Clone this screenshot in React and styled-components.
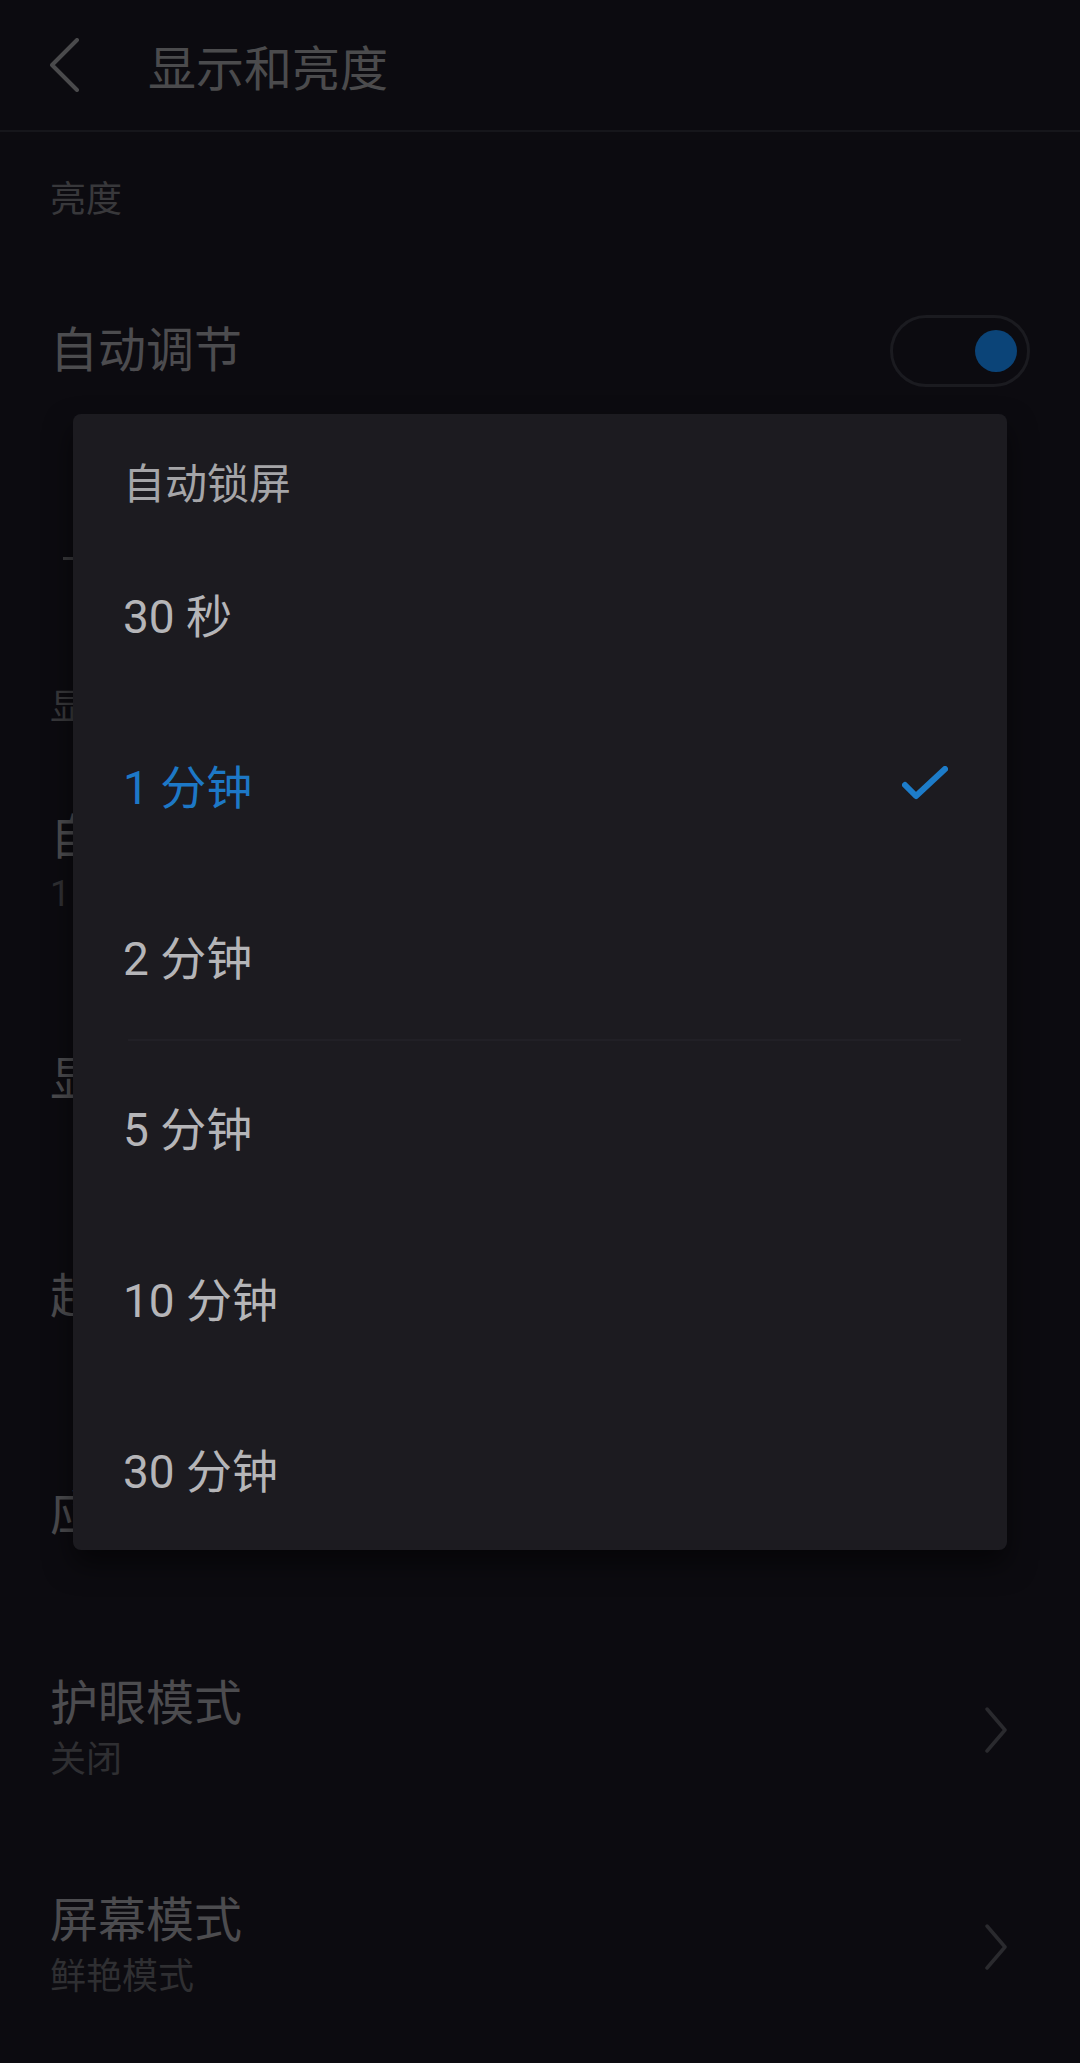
import React from 'react';
import styled, { createGlobalStyle } from 'styled-components';

const GlobalStyle = createGlobalStyle`
html, body {
    margin: 0;
    padding: 0;
    background: #0c0b10;
}
* {
    box-sizing: border-box;
}
`

const Screen = styled.div`
position: relative;
width: 1080px;
height: 2063px;
overflow: hidden;
background: #0c0b10;
font-family: Roboto, "Noto Sans CJK SC", sans-serif;
`
const Header = styled.header`
display: flex;
align-items: center;
height: 132px;
padding-left: 50px;
border-bottom: 2px solid #16161b;
`
const HeaderTitle = styled.h1`
margin: 0 0 0 68px;
font-size: 48px;
font-weight: 400;
color: #4b4b4d;
`
const SectionLabel = styled.div`
height: ${p => p.$height}px;
padding: ${p => p.$top}px 50px 0;
font-size: 36px;
line-height: 52px;
color: #38383b;
`
const Row = styled.div`
display: flex;
align-items: center;
justify-content: space-between;
height: ${p => p.$height || 217}px;
padding: 0 50px;
`
const Texts = styled.div`
display: flex;
flex-direction: column;
`
const Title = styled.span`
font-size: 48px;
line-height: 60px;
color: #4c4c4f;
white-space: nowrap;
`
const Sub = styled.span`
font-size: 36px;
line-height: 52px;
color: #2f2f32;
`
const Arrow = styled.div`
display: flex;
margin-right: 22px;
`
const Track = styled.div`
display: flex;
align-items: center;
justify-content: flex-end;
width: 140px;
height: 72px;
padding-right: 10px;
border: 3px solid #1b1b20;
border-radius: 36px;
`
const Knob = styled.div`
width: 42px;
height: 42px;
border-radius: 50%;
background: #0b4478;
`
const SliderRow = styled.div`
display: flex;
align-items: center;
height: 248px;
padding: 0 100px 0 63px;
`
const SliderLine = styled.div`
flex: 1;
height: 3px;
background: #38383b;
`

const Overlay = styled.div`
position: absolute;
inset: 0;
display: flex;
justify-content: center;
align-items: flex-start;
padding-top: 414px;
`
const Dialog = styled.div`
width: 934px;
height: 1136px;
background: #1c1b20;
border-radius: 8px;
box-shadow: 0 14px 28px rgba(0, 0, 0, 0.55);
overflow: hidden;
`
const DialogTitle = styled.div`
height: 113px;
padding: 48px 50px 0;
font-size: 42px;
line-height: 46px;
color: #a5a5a8;
`
const Option = styled.div`
display: flex;
align-items: center;
justify-content: space-between;
height: 171px;
padding: 0 59px 0 50px;
font-size: 46px;
color: ${p => p.$selected ? '#1d78c6' : '#b5b5b8'};
`
const Divider = styled.div`
height: 2px;
margin: -1px 46px -1px 55px;
background: #212026;
`

function BackChevron() {
    return (
        <svg width="30" height="54" viewBox="0 0 30 54">
            <polyline points="27,2 2,27 27,52" fill="none" stroke="#4a4a4c" strokeWidth="4" strokeLinecap="round" strokeLinejoin="round" />
        </svg>
    )
}

function NextChevron() {
    return (
        <svg width="24" height="46" viewBox="0 0 24 46">
            <polyline points="3,2 21,23 3,44" fill="none" stroke="#2a2a2e" strokeWidth="3.5" strokeLinecap="round" strokeLinejoin="round" />
        </svg>
    )
}

function Check() {
    return (
        <svg width="46" height="36" viewBox="0 0 46 36">
            <polyline points="3,19 14,30 43,3" fill="none" stroke="#1d7cc9" strokeWidth="6" strokeLinecap="round" strokeLinejoin="round" />
        </svg>
    )
}

const options = ['30 秒', '1 分钟', '2 分钟', '5 分钟', '10 分钟', '30 分钟'];

function App() {
    const selected = '1 分钟';

    return (
        <>
            <GlobalStyle />
            <Screen>
                <Header>
                    <BackChevron />
                    <HeaderTitle>显示和亮度</HeaderTitle>
                </Header>

                <SectionLabel $height={136} $top={42}>亮度</SectionLabel>
                <Row $height={166}>
                    <Title>自动调节</Title>
                    <Track><Knob /></Track>
                </Row>
                <SliderRow><SliderLine /></SliderRow>

                <SectionLabel $height={74} $top={0}>显示</SectionLabel>
                <Row $height={215}>
                    <Texts>
                        <Title>自动锁屏</Title>
                        <Sub>1 分钟</Sub>
                    </Texts>
                </Row>
                <Row><Title>显示大小</Title></Row>
                <Row><Title>超清画质</Title></Row>
                <Row><Title>应用全屏显示</Title></Row>
                <Row $height={216}>
                    <Texts>
                        <Title>护眼模式</Title>
                        <Sub>关闭</Sub>
                    </Texts>
                    <Arrow><NextChevron /></Arrow>
                </Row>
                <Row>
                    <Texts>
                        <Title>屏幕模式</Title>
                        <Sub>鲜艳模式</Sub>
                    </Texts>
                    <Arrow><NextChevron /></Arrow>
                </Row>

                <Overlay>
                    <Dialog>
                        <DialogTitle>自动锁屏</DialogTitle>
                        {options.map((o, i) => (
                            <React.Fragment key={o}>
                                {i === 3 && <Divider />}
                                <Option $selected={o === selected}>
                                    <span>{o}</span>
                                    {o === selected && <Check />}
                                </Option>
                            </React.Fragment>
                        ))}
                    </Dialog>
                </Overlay>
            </Screen>
        </>
    )
}

export default App;
